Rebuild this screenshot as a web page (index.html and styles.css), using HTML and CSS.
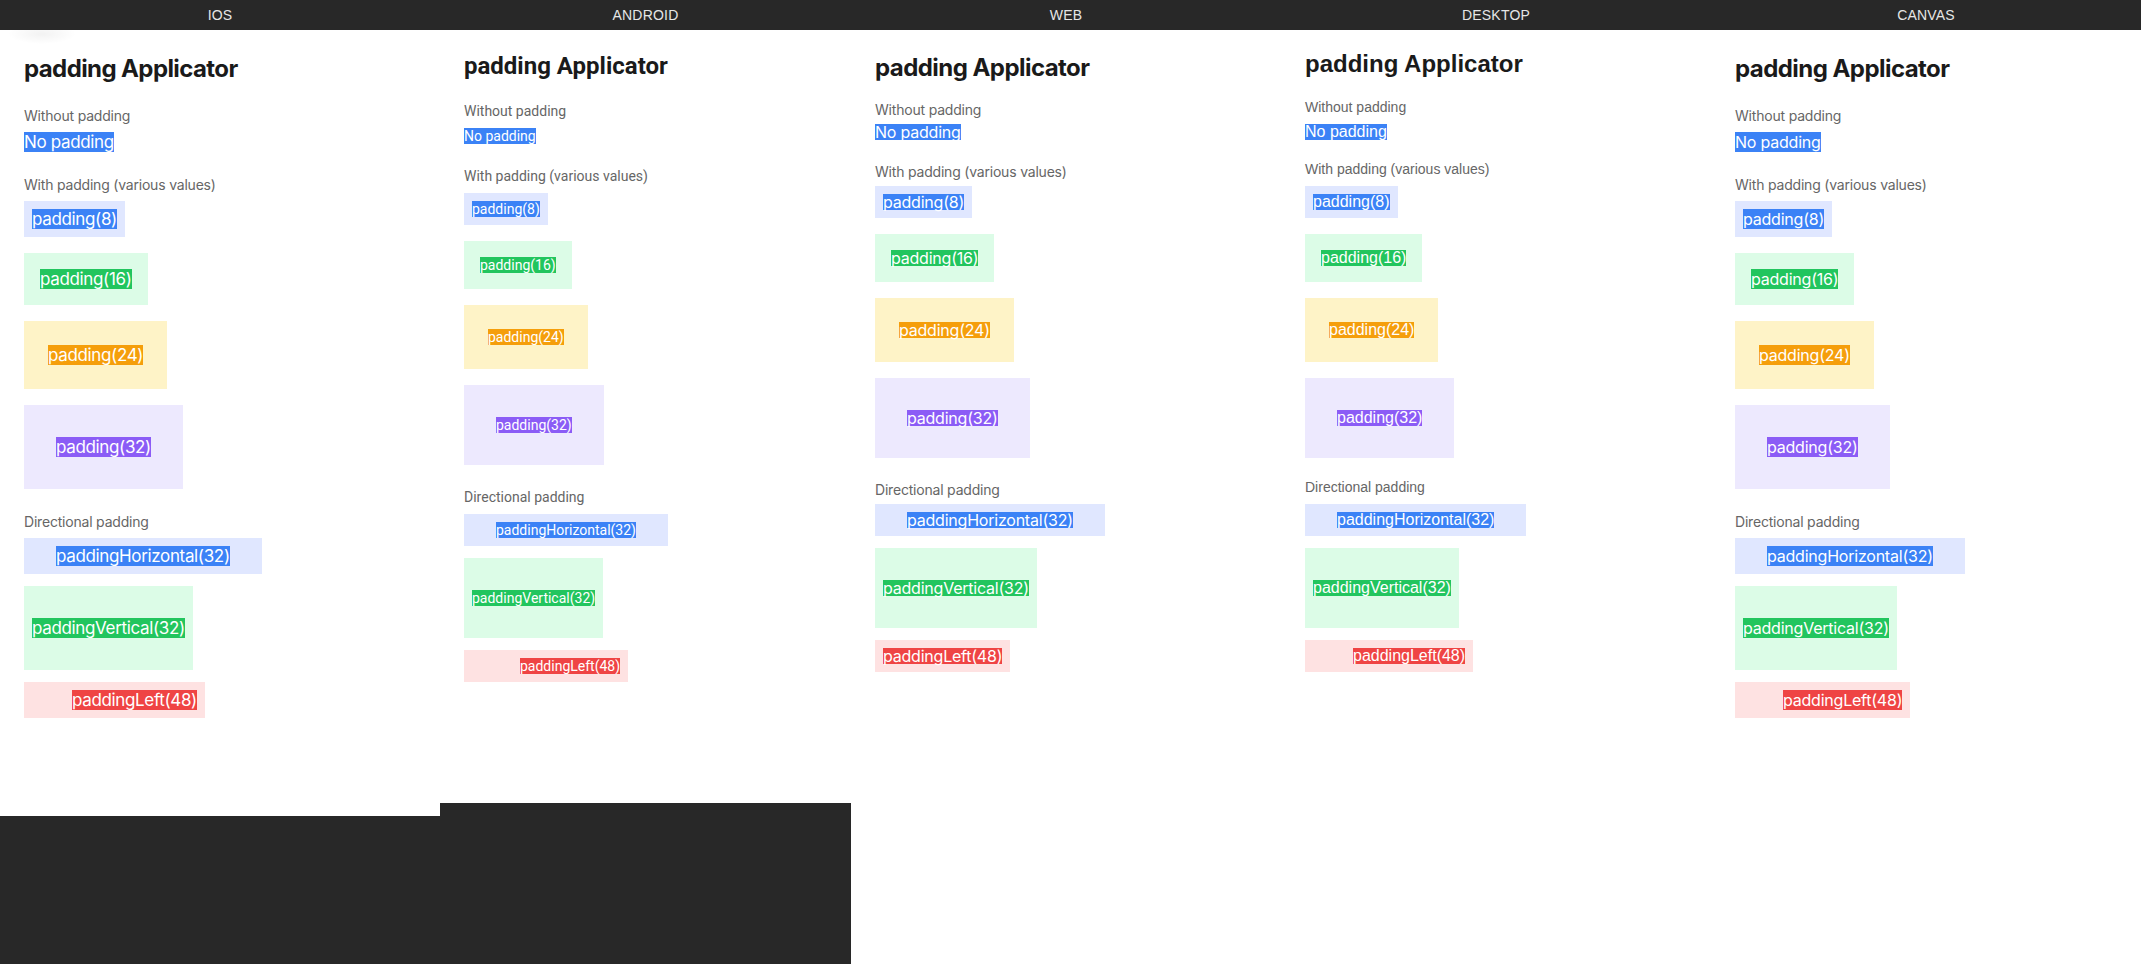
FILE: index.html
```html
<!DOCTYPE html>
<html lang="en">
<head>
    <meta charset="UTF-8">
    <meta name="viewport" content="width=device-width, initial-scale=1.0">
    <title>padding Applicator - platforms</title>
    <link rel="stylesheet" href="styles.css">
</head>
<body>

<div class="stage">

    <div class="device ios">
        <div class="device-label">IOS</div>
        <div class="screen">
            <h2 class="title">padding Applicator</h2>
            <div class="section">
                <div class="caption">Without padding</div>
                <div class="stack">
                    <span class="chip-text blue">No padding</span>
                </div>
            </div>
            <div class="section">
                <div class="caption">With padding (various values)</div>
                <div class="stack">
                    <div class="box bg-blue p8"><span class="chip-text blue">padding(8)</span></div>
                    <div class="box bg-green p16"><span class="chip-text green">padding(16)</span></div>
                    <div class="box bg-amber p24"><span class="chip-text amber">padding(24)</span></div>
                    <div class="box bg-purple p32"><span class="chip-text purple">padding(32)</span></div>
                </div>
            </div>
            <div class="section">
                <div class="caption">Directional padding</div>
                <div class="stack tight">
                    <div class="box bg-blue px32"><span class="chip-text blue">paddingHorizontal(32)</span></div>
                    <div class="box bg-green py32"><span class="chip-text green">paddingVertical(32)</span></div>
                    <div class="box bg-red pl48"><span class="chip-text red">paddingLeft(48)</span></div>
                </div>
            </div>
        </div>
    </div>

    <div class="device android">
        <div class="device-label">ANDROID</div>
        <div class="screen">
            <h2 class="title">padding Applicator</h2>
            <div class="section">
                <div class="caption">Without padding</div>
                <div class="stack">
                    <span class="chip-text blue">No padding</span>
                </div>
            </div>
            <div class="section">
                <div class="caption">With padding (various values)</div>
                <div class="stack">
                    <div class="box bg-blue p8"><span class="chip-text blue">padding(8)</span></div>
                    <div class="box bg-green p16"><span class="chip-text green">padding(16)</span></div>
                    <div class="box bg-amber p24"><span class="chip-text amber">padding(24)</span></div>
                    <div class="box bg-purple p32"><span class="chip-text purple">padding(32)</span></div>
                </div>
            </div>
            <div class="section">
                <div class="caption">Directional padding</div>
                <div class="stack tight">
                    <div class="box bg-blue px32"><span class="chip-text blue">paddingHorizontal(32)</span></div>
                    <div class="box bg-green py32"><span class="chip-text green">paddingVertical(32)</span></div>
                    <div class="box bg-red pl48"><span class="chip-text red">paddingLeft(48)</span></div>
                </div>
            </div>
        </div>
    </div>

    <div class="device web">
        <div class="device-label">WEB</div>
        <div class="screen">
            <h2 class="title">padding Applicator</h2>
            <div class="section">
                <div class="caption">Without padding</div>
                <div class="stack">
                    <span class="chip-text blue">No padding</span>
                </div>
            </div>
            <div class="section">
                <div class="caption">With padding (various values)</div>
                <div class="stack">
                    <div class="box bg-blue p8"><span class="chip-text blue">padding(8)</span></div>
                    <div class="box bg-green p16"><span class="chip-text green">padding(16)</span></div>
                    <div class="box bg-amber p24"><span class="chip-text amber">padding(24)</span></div>
                    <div class="box bg-purple p32"><span class="chip-text purple">padding(32)</span></div>
                </div>
            </div>
            <div class="section">
                <div class="caption">Directional padding</div>
                <div class="stack tight">
                    <div class="box bg-blue px32"><span class="chip-text blue">paddingHorizontal(32)</span></div>
                    <div class="box bg-green py32"><span class="chip-text green">paddingVertical(32)</span></div>
                    <div class="box bg-red pl48"><span class="chip-text red">paddingLeft(48)</span></div>
                </div>
            </div>
        </div>
    </div>

    <div class="device desktop">
        <div class="device-label">DESKTOP</div>
        <div class="screen">
            <h2 class="title">padding Applicator</h2>
            <div class="section">
                <div class="caption">Without padding</div>
                <div class="stack">
                    <span class="chip-text blue">No padding</span>
                </div>
            </div>
            <div class="section">
                <div class="caption">With padding (various values)</div>
                <div class="stack">
                    <div class="box bg-blue p8"><span class="chip-text blue">padding(8)</span></div>
                    <div class="box bg-green p16"><span class="chip-text green">padding(16)</span></div>
                    <div class="box bg-amber p24"><span class="chip-text amber">padding(24)</span></div>
                    <div class="box bg-purple p32"><span class="chip-text purple">padding(32)</span></div>
                </div>
            </div>
            <div class="section">
                <div class="caption">Directional padding</div>
                <div class="stack tight">
                    <div class="box bg-blue px32"><span class="chip-text blue">paddingHorizontal(32)</span></div>
                    <div class="box bg-green py32"><span class="chip-text green">paddingVertical(32)</span></div>
                    <div class="box bg-red pl48"><span class="chip-text red">paddingLeft(48)</span></div>
                </div>
            </div>
        </div>
    </div>

    <div class="device canvas">
        <div class="device-label">CANVAS</div>
        <div class="screen">
            <h2 class="title">padding Applicator</h2>
            <div class="section">
                <div class="caption">Without padding</div>
                <div class="stack">
                    <span class="chip-text blue">No padding</span>
                </div>
            </div>
            <div class="section">
                <div class="caption">With padding (various values)</div>
                <div class="stack">
                    <div class="box bg-blue p8"><span class="chip-text blue">padding(8)</span></div>
                    <div class="box bg-green p16"><span class="chip-text green">padding(16)</span></div>
                    <div class="box bg-amber p24"><span class="chip-text amber">padding(24)</span></div>
                    <div class="box bg-purple p32"><span class="chip-text purple">padding(32)</span></div>
                </div>
            </div>
            <div class="section">
                <div class="caption">Directional padding</div>
                <div class="stack tight">
                    <div class="box bg-blue px32"><span class="chip-text blue">paddingHorizontal(32)</span></div>
                    <div class="box bg-green py32"><span class="chip-text green">paddingVertical(32)</span></div>
                    <div class="box bg-red pl48"><span class="chip-text red">paddingLeft(48)</span></div>
                </div>
            </div>
        </div>
    </div>

</div>

</body>
</html>
```

FILE: styles.css
```css
/* Khung chung */
html, body {
    margin: 0;
    padding: 0;
    height: 100%;
}
body {
    background-color: #282828;
    font-family: 'Liberation Sans', Arial, sans-serif;
}
.stage {
    display: flex;
    height: 964px;
    overflow: hidden;
}

/* Moi nen tang la mot cot */
.device {
    display: flex;
    flex-direction: column;
    flex: 0 0 430px;
    font-family: var(--font);
    --title-ls: 0;
    --label-ls: 0;
    --chip-ls: 0;
}
.device-label {
    height: 30px;
    line-height: 30px;
    text-align: center;
    color: #e6e6e6;
    font-family: 'Liberation Sans', Arial, sans-serif;
    font-size: 14px;
    letter-spacing: 0.2px;
}
.screen {
    flex: 1;
    background-color: #fff;
    padding: 24px 24px 0;
}

/* Thong so rieng tung nen tang */
.ios {
    flex-basis: 440px;
    --font: 'Inter', 'Noto Sans', sans-serif;
    --chip-size: 17px;
    --chip-lh: 20px;
    --title-lh: 29px;
    --title-mb: 24px;
    --label-lh: 17px;
    --label-mb: 8px;
    --section-gap: 24px;
    --title-ls: -0.6px;
    --label-ls: -0.2px;
    --chip-ls: -0.35px;
}
.ios .screen {
    flex: 0 0 786px;
    box-sizing: border-box;
    background: radial-gradient(ellipse 34px 10px at 42px 4px, rgba(0, 0, 0, 0.05), rgba(0, 0, 0, 0)) no-repeat, #fff;
}
.android {
    flex-basis: 411px;
    --font: 'Roboto', 'Noto Sans', sans-serif;
    --chip-size: 14px;
    --chip-lh: 16px;
    --title-lh: 25px;
    --title-mb: 24px;
    --label-lh: 17px;
    --label-mb: 8px;
    --section-gap: 24px;
}
.android .screen {
    flex: 0 0 773px;
    box-sizing: border-box;
}
.web {
    --font: 'Inter', 'Noto Sans', sans-serif;
    --chip-size: 16px;
    --chip-lh: 16px;
    --title-lh: 28px;
    --title-mb: 19px;
    --label-lh: 17px;
    --label-mb: 6px;
    --section-gap: 23px;
    --title-ls: -0.55px;
    --label-ls: -0.2px;
    --chip-ls: -0.22px;
}
.desktop {
    --font: 'Liberation Sans', Arial, sans-serif;
    --chip-size: 16px;
    --chip-lh: 16px;
    --title-lh: 20px;
    --title-mb: 27px;
    --label-lh: 13px;
    --label-mb: 10px;
    --section-gap: 23px;
}
.canvas {
    --font: 'Inter', 'Noto Sans', sans-serif;
    --chip-size: 16px;
    --chip-lh: 20px;
    --title-lh: 29px;
    --title-mb: 24px;
    --label-lh: 17px;
    --label-mb: 8px;
    --section-gap: 24px;
    --title-ls: -0.55px;
    --label-ls: -0.2px;
    --chip-ls: -0.22px;
}

/* Noi dung */
.title {
    margin: 0 0 var(--title-mb);
    font-size: 24px;
    font-weight: bold;
    line-height: var(--title-lh);
    letter-spacing: var(--title-ls);
    color: #1a1a1a;
}
.section + .section {
    margin-top: var(--section-gap);
}
.caption {
    font-size: 14px;
    line-height: var(--label-lh);
    letter-spacing: var(--label-ls);
    color: #666;
    margin-bottom: var(--label-mb);
}
.stack {
    display: flex;
    flex-direction: column;
    align-items: flex-start;
    gap: 16px;
}
.stack.tight {
    gap: 12px;
}
.chip-text {
    display: block;
    color: #fff;
    font-size: var(--chip-size);
    line-height: var(--chip-lh);
    letter-spacing: var(--chip-ls);
    white-space: nowrap;
}
.stack > .chip-text {
    display: inline-block;
}

/* Mau */
.blue { background-color: #3b82f6; }
.green { background-color: #22c55e; }
.amber { background-color: #f59e0b; }
.purple { background-color: #8b5cf6; }
.red { background-color: #ef4444; }
.bg-blue { background-color: #e0e7ff; }
.bg-green { background-color: #dcfce7; }
.bg-amber { background-color: #fef3c7; }
.bg-purple { background-color: #ede9fe; }
.bg-red { background-color: #fee2e2; }

/* Cac muc padding */
.p8 { padding: 8px; }
.p16 { padding: 16px; }
.p24 { padding: 24px; }
.p32 { padding: 32px; }
.px32 { padding: 8px 32px; }
.py32 { padding: 32px 8px; }
.pl48 { padding: 8px 8px 8px 48px; }
/* android cong them padding goc, web thi bo qua paddingLeft */
.android .pl48 { padding-left: 56px; }
.web .pl48 { padding-left: 8px; }
```
